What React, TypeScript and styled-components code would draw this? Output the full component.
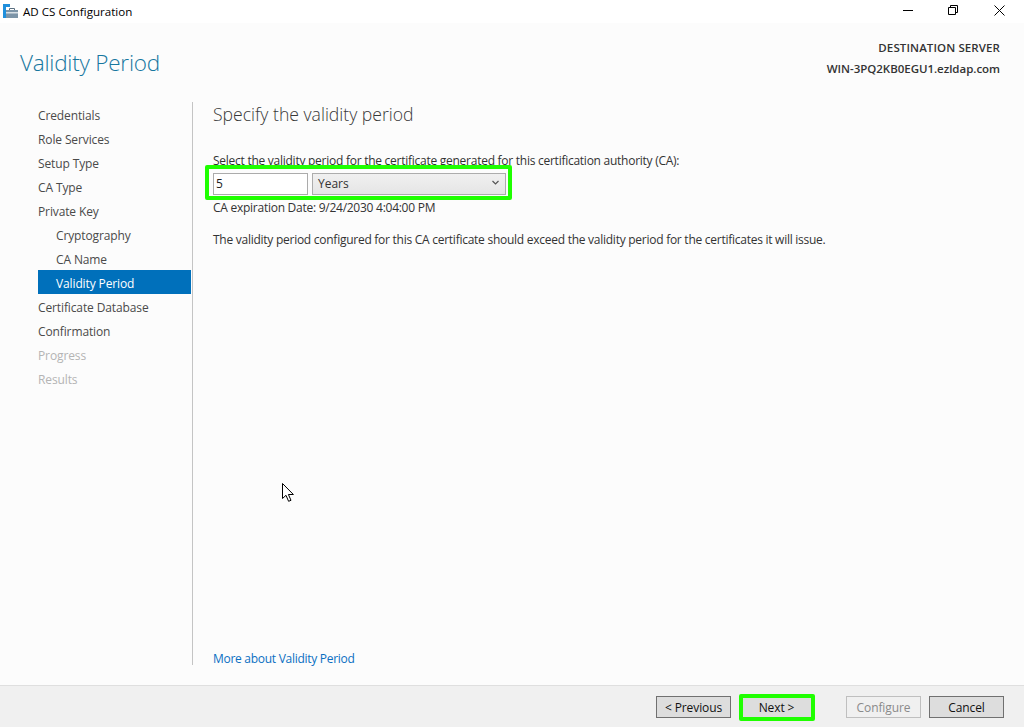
import React from "react";
import styled, { createGlobalStyle } from "styled-components";

const Global = createGlobalStyle`
  html, body { margin: 0; padding: 0; height: 100%; background: #fcfcfc; overflow: hidden; }
  #root { height: 100%; }
  * { box-sizing: border-box; }
`;

const Window = styled.div`
  position: relative;
  width: 1024px;
  height: 727px;
  display: flex;
  flex-direction: column;
  font-family: "Open Sans", "Noto Sans", sans-serif;
  font-size: 12px;
  color: #333;
  background: #fcfcfc;
`;

const TitleBar = styled.div`
  height: 23px;
  flex: none;
  background: #fff;
  display: flex;
  align-items: center;
  padding-left: 3px;
`;

const TitleText = styled.span`
  margin-left: 5px;
  font-size: 11.6px;
  color: #000;
`;

const WindowButtons = styled.div`
  margin-left: auto;
  display: flex;
  align-items: center;
  margin-top: -3px;
  padding-right: 19px;
  gap: 35px;
`;

const Header = styled.div`
  height: 79px;
  flex: none;
  display: flex;
  justify-content: space-between;
  padding: 14px 24px 0 20px;
`;

const PageTitle = styled.h1`
  margin: 10px 0 0;
  font-size: 22.5px;
  line-height: 32px;
  font-weight: 300;
  color: #17779f;
  letter-spacing: -0.22px;
`;

const Server = styled.div`
  text-align: right;
  font-size: 11.5px;
  line-height: 21px;
  font-weight: 600;
  color: #333;
`;

const ServerLabel = styled.div`
  letter-spacing: 0.1px;
`;

const ServerName = styled.div`
  letter-spacing: -0.03px;
`;

const Body = styled.div`
  flex: 1;
  display: flex;
  min-height: 0;
  padding-bottom: 18px;
`;

const Nav = styled.nav`
  width: 193px;
  flex: none;
  padding: 0 0 0 38px;
  margin-bottom: 2px;
  border-right: 1px solid #c4c4c4;
`;

const NavItem = styled.div<{ $sub?: boolean; $active?: boolean; $disabled?: boolean }>`
  height: 24px;
  line-height: 27px;
  width: 153px;
  white-space: nowrap;
  padding-left: ${(p) => (p.$sub ? "18px" : "0")};
  background: ${(p) => (p.$active ? "#0070bb" : "transparent")};
  color: ${(p) => (p.$active ? "#fff" : p.$disabled ? "#b4b4b4" : "#4a4a4a")};
  letter-spacing: -0.12px;
`;

const Main = styled.main`
  flex: 1;
  display: flex;
  flex-direction: column;
  padding: 0 0 0 20px;
`;

const Heading = styled.h2`
  margin: 0 0 26px;
  height: 25px;
  font-size: 17.6px;
  line-height: 25px;
  font-weight: 300;
  color: #383838;
`;

const Line = styled.div`
  line-height: 16px;
  color: #333;
  white-space: nowrap;
  letter-spacing: -0.26px;
`;

const FieldRow = styled.div`
  display: flex;
  gap: 4px;
  height: 22px;
  margin: 4px 0 5px;
`;

const Input = styled.div`
  width: 95px;
  height: 22px;
  border: 1px solid #ababab;
  background: #fff;
  padding-left: 2px;
  line-height: 20px;
  color: #222;
`;

const Select = styled.div`
  width: 194px;
  height: 22px;
  border: 1px solid #acacac;
  background: linear-gradient(#f0f0f0, #e5e5e5);
  padding: 0 6px 0 5px;
  line-height: 20px;
  color: #333;
  display: flex;
  justify-content: space-between;
  align-items: center;
`;

const Chevron = styled.svg`
  flex: none;
  margin-top: -4px;
`;

const Note = styled(Line)`
  margin-top: 16px;
`;

const Link = styled.a`
  margin-top: auto;
  line-height: 16px;
  color: #0a6fc2;
  letter-spacing: -0.28px;
`;

const Footer = styled.div`
  height: 42px;
  flex: none;
  background: #f0f0f0;
  border-top: 1px solid #dfdfdf;
  display: flex;
  justify-content: flex-end;
  align-items: flex-start;
  padding: 10px 20px 0 0;
`;

const Button = styled.div<{ $disabled?: boolean; $gap?: number }>`
  width: 75px;
  height: 22px;
  margin-left: ${(p) => p.$gap ?? 0}px;
  border: 1px solid ${(p) => (p.$disabled ? "#bfbfbf" : "#707070")};
  background: ${(p) => (p.$disabled ? "#f0f0f0" : "#dddddd")};
  color: ${(p) => (p.$disabled ? "#8a8a8a" : "#111")};
  text-align: center;
  line-height: 21px;
  letter-spacing: -0.1px;
`;

const Highlight = styled.div<{ $x: number; $y: number; $w: number; $h: number }>`
  position: absolute;
  left: ${(p) => p.$x}px;
  top: ${(p) => p.$y}px;
  width: ${(p) => p.$w}px;
  height: ${(p) => p.$h}px;
  border: 4px solid #1fff00;
  border-radius: 2px;
  pointer-events: none;
`;

const Cursor = styled.svg`
  position: absolute;
  left: 282px;
  top: 483px;
`;

const Icon = styled.svg`
  flex: none;
`;

const items: { label: string; sub?: boolean; active?: boolean; disabled?: boolean }[] = [
  { label: "Credentials" },
  { label: "Role Services" },
  { label: "Setup Type" },
  { label: "CA Type" },
  { label: "Private Key" },
  { label: "Cryptography", sub: true },
  { label: "CA Name", sub: true },
  { label: "Validity Period", sub: true, active: true },
  { label: "Certificate Database" },
  { label: "Confirmation" },
  { label: "Progress", disabled: true },
  { label: "Results", disabled: true },
];

export default function App() {
  return (
    <Window>
      <Global />
      <TitleBar>
        <Icon width="15" height="15" viewBox="0 0 15 15">
          <rect x="0" y="0" width="7" height="3" fill="#1f8fdc" />
          <rect x="0" y="3" width="3" height="11" fill="#1f8fdc" />
          <rect x="3" y="6" width="12" height="8" fill="#7d95a8" />
          <rect x="3" y="8" width="12" height="1.5" fill="#d8e0e6" />
          <path d="M6.5 6V4.5h5V6" fill="none" stroke="#5b6f80" />
        </Icon>
        <TitleText>AD CS Configuration</TitleText>
        <WindowButtons>
          <Icon width="10" height="10" viewBox="0 0 10 10">
            <path d="M0 5.5h10" stroke="#000" />
          </Icon>
          <Icon width="10" height="10" viewBox="0 0 10 10">
            <path d="M.5 2.5h7v7h-7zM2.5 2.5v-2h7v7h-2" fill="none" stroke="#000" />
          </Icon>
          <Icon width="11" height="11" viewBox="0 0 11 11" style={{ marginLeft: 1 }}>
            <path d="M.5.5l10 10M10.5.5l-10 10" stroke="#000" />
          </Icon>
        </WindowButtons>
      </TitleBar>
      <Header>
        <PageTitle>Validity Period</PageTitle>
        <Server>
          <ServerLabel>DESTINATION SERVER</ServerLabel>
          <ServerName>WIN-3PQ2KB0EGU1.ezldap.com</ServerName>
        </Server>
      </Header>
      <Body>
        <Nav>
          {items.map((i) => (
            <NavItem key={i.label} $sub={i.sub} $active={i.active} $disabled={i.disabled}>
              {i.label}
            </NavItem>
          ))}
        </Nav>
        <Main>
          <Heading>Specify the validity period</Heading>
          <Line>Select the validity period for the certificate generated for this certification authority (CA):</Line>
          <FieldRow>
            <Input>5</Input>
            <Select>
              Years
              <Chevron width="7" height="5" viewBox="0 0 7 5">
                <path d="M.5 1L3.5 4 6.5 1" fill="none" stroke="#555" strokeWidth="1.2" />
              </Chevron>
            </Select>
          </FieldRow>
          <Line>CA expiration Date: 9/24/2030 4:04:00 PM</Line>
          <Note>The validity period configured for this CA certificate should exceed the validity period for the certificates it will issue.</Note>
          <Link>More about Validity Period</Link>
        </Main>
      </Body>
      <Footer>
        <Button>&lt; Previous</Button>
        <Button $gap={8}>Next &gt;</Button>
        <Button $disabled $gap={32}>Configure</Button>
        <Button $gap={8}>Cancel</Button>
      </Footer>
      <Highlight $x={205} $y={165} $w={307} $h={35} />
      <Highlight $x={739} $y={694} $w={76} $h={27} />
      <Cursor width="12" height="19" viewBox="0 0 12 19">
        <path d="M.5.5v15l3.5-3.2 2.6 6 2.4-1-2.6-5.8h5z" fill="#fff" stroke="#000" />
      </Cursor>
    </Window>
  );
}
